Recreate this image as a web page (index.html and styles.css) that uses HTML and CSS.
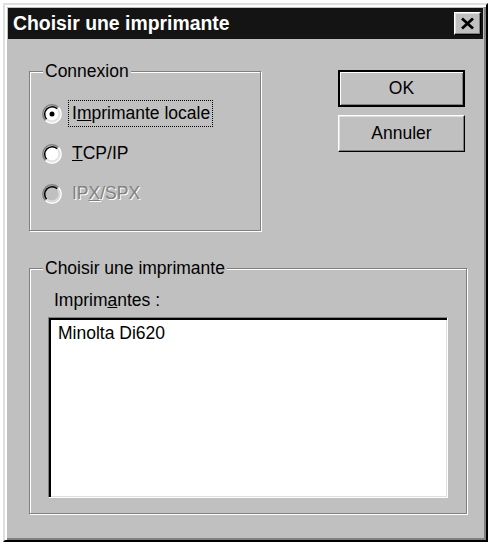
FILE: index.html
```html
<!DOCTYPE html>
<html lang="fr">
<head>
    <meta charset="UTF-8">
    <meta name="viewport" content="width=device-width, initial-scale=1.0">
    <title>Choisir une imprimante</title>
    <link rel="stylesheet" href="styles.css">
</head>
<body>
    <div class="window">
        <div class="titlebar">
            <span class="title">Choisir une imprimante</span>
            <button class="close" aria-label="Fermer">
                <svg width="15" height="13" viewBox="0 0 15 13">
                    <path d="M2 1.5 L13 11.5 M13 1.5 L2 11.5" stroke="#000" stroke-width="2.8" fill="none"/>
                </svg>
            </button>
        </div>

        <div class="client">
            <div class="top-row">
                <fieldset class="group group-conn">
                    <legend>Connexion</legend>
                    <div class="radio-list">
                        <label class="radio-row">
                            <svg class="radio" width="20" height="20" viewBox="0 0 12 12">
                                <circle cx="6" cy="6" r="5" fill="#fff"/>
                                <path d="M2.11 9.89 A5.5 5.5 0 0 1 9.89 2.11" stroke="#808080" stroke-width="0.9" fill="none"/>
                                <path d="M9.89 2.11 A5.5 5.5 0 0 1 2.11 9.89" stroke="#fff" stroke-width="0.9" fill="none"/>
                                <path d="M2.82 9.18 A4.5 4.5 0 0 1 9.18 2.82" stroke="#000" stroke-width="0.9" fill="none"/>
                                <path d="M9.18 2.82 A4.5 4.5 0 0 1 2.82 9.18" stroke="#dfdfdf" stroke-width="0.9" fill="none"/>
                                <circle cx="6" cy="6" r="1.5" fill="#000"/>
                            </svg>
                            <span class="radio-text focused">I<u>m</u>primante locale</span>
                        </label>
                        <label class="radio-row">
                            <svg class="radio" width="20" height="20" viewBox="0 0 12 12">
                                <circle cx="6" cy="6" r="5" fill="#fff"/>
                                <path d="M2.11 9.89 A5.5 5.5 0 0 1 9.89 2.11" stroke="#808080" stroke-width="0.9" fill="none"/>
                                <path d="M9.89 2.11 A5.5 5.5 0 0 1 2.11 9.89" stroke="#fff" stroke-width="0.9" fill="none"/>
                                <path d="M2.82 9.18 A4.5 4.5 0 0 1 9.18 2.82" stroke="#000" stroke-width="0.9" fill="none"/>
                                <path d="M9.18 2.82 A4.5 4.5 0 0 1 2.82 9.18" stroke="#dfdfdf" stroke-width="0.9" fill="none"/>
                            </svg>
                            <span class="radio-text"><u>T</u>CP/IP</span>
                        </label>
                        <label class="radio-row disabled">
                            <svg class="radio" width="20" height="20" viewBox="0 0 12 12">
                                <circle cx="6" cy="6" r="5" fill="#c0c0c0"/>
                                <path d="M2.11 9.89 A5.5 5.5 0 0 1 9.89 2.11" stroke="#808080" stroke-width="0.9" fill="none"/>
                                <path d="M9.89 2.11 A5.5 5.5 0 0 1 2.11 9.89" stroke="#fff" stroke-width="0.9" fill="none"/>
                                <path d="M2.82 9.18 A4.5 4.5 0 0 1 9.18 2.82" stroke="#000" stroke-width="0.9" fill="none"/>
                                <path d="M9.18 2.82 A4.5 4.5 0 0 1 2.82 9.18" stroke="#dfdfdf" stroke-width="0.9" fill="none"/>
                            </svg>
                            <span class="radio-text">IP<u>X</u>/SPX</span>
                        </label>
                    </div>
                </fieldset>

                <div class="buttons">
                    <button class="btn btn-default">OK</button>
                    <button class="btn">Annuler</button>
                </div>
            </div>

            <fieldset class="group group-printer">
                <legend>Choisir une imprimante</legend>
                <div class="group-body">
                    <div class="field-label">Imprim<u>a</u>ntes :</div>
                    <div class="listbox">
                        <div class="list-item">Minolta Di620</div>
                    </div>
                </div>
            </fieldset>
        </div>
    </div>
</body>
</html>
```

FILE: styles.css
```css
body {
    margin: 0;
    padding: 0;
    background: #fff;
    font-family: "Liberation Sans", Arial, sans-serif;
    font-size: 17.5px;
    color: #000;
}
.window {
    margin: 3px;
    width: 485px;
    height: 539px;
    box-sizing: border-box;
    padding: 3px;
    background: #c0c0c0;
    border: 2px solid;
    border-color: #dfdfdf #000 #000 #dfdfdf;
    box-shadow: inset 2px 2px 0 #fff, inset -2px -2px 0 #808080;
}
.titlebar {
    height: 31px;
    background: #141414;
    display: flex;
    align-items: center;
    justify-content: space-between;
}
.title {
    color: #fff;
    font-weight: bold;
    font-size: 19.4px;
    padding-left: 5px;
}
.close {
    width: 27px;
    height: 23px;
    margin-right: 2px;
    padding: 0;
    background: #c0c0c0;
    border: 1px solid;
    border-color: #fff #000 #000 #fff;
    box-shadow: inset -1px -1px 0 #808080, inset 1px 1px 0 #dfdfdf;
    display: flex;
    align-items: center;
    justify-content: center;
}
.client {
    padding: 22px 0 0 21px;
}
.top-row {
    display: flex;
    align-items: flex-start;
}
.group {
    margin: 0;
    padding: 0;
    min-width: 0;
    box-sizing: border-box;
    border: 1px solid #808080;
    box-shadow: inset 1px 1px 0 #fff, 1px 1px 0 #fff;
}
.group legend {
    margin-left: 13px;
    padding: 0 2px;
    line-height: 20px;
    background: #c0c0c0;
}
.group-conn {
    width: 232px;
}
.radio-list {
    display: flex;
    flex-direction: column;
    gap: 13px;
    padding: 19px 0 23px 12px;
}
.radio-row {
    display: flex;
    align-items: center;
    height: 27px;
}
.radio {
    flex: none;
    margin-right: 6px;
}
.radio-text {
    padding: 2px 2px 2px 3px;
    line-height: 21px;
    border: 1px dotted transparent;
}
.radio-text.focused {
    border-color: #000;
}
.radio-row.disabled .radio-text {
    color: #808080;
    text-shadow: 1px 1px 0 #fff;
}
.buttons {
    display: flex;
    flex-direction: column;
    gap: 8px;
    margin: 9px 0 0 77px;
}
.btn {
    width: 127px;
    height: 37px;
    padding: 0;
    font-family: inherit;
    font-size: 17.5px;
    color: #000;
    background: #c0c0c0;
    border: 1px solid;
    border-color: #fff #000 #000 #fff;
    box-shadow: inset -1px -1px 0 #808080, inset 1px 1px 0 #dfdfdf;
}
.btn-default {
    border: 2px solid #000;
    box-shadow: inset 1px 1px 0 #fff, inset -1px -1px 0 #808080;
}
.group-printer {
    width: 438px;
    margin-top: 27px;
}
.group-body {
    padding: 12px 18px 15px 18px;
}
.field-label {
    margin-left: 6px;
    line-height: 20px;
}
.listbox {
    margin-top: 7px;
    width: 400px;
    height: 181px;
    box-sizing: border-box;
    background: #fff;
    border: 1px solid;
    border-color: #808080 #fff #fff #808080;
    box-shadow: inset 2px 2px 0 #000, inset -1px -1px 0 #dfdfdf;
}
.list-item {
    padding: 5px 0 0 9px;
    line-height: 20px;
}
```
